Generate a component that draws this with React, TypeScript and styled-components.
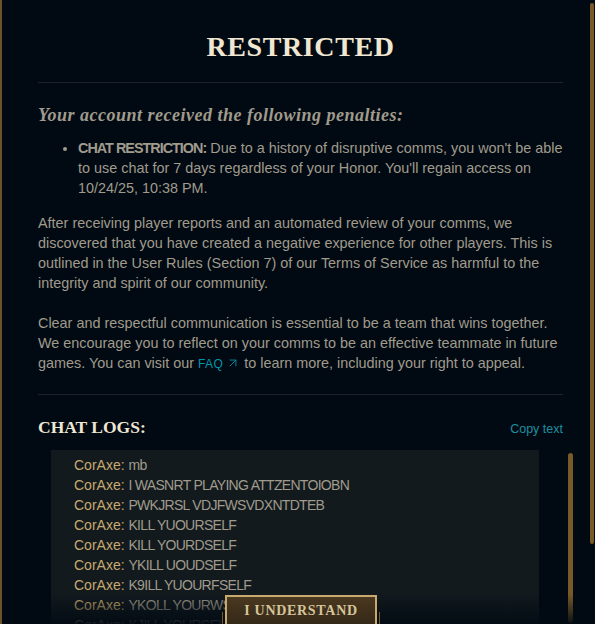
import React from 'react';
import styled, { createGlobalStyle } from 'styled-components';
import { ArrowUpRight } from 'lucide-react';

const GlobalStyle = createGlobalStyle`
	html, body {
		margin: 0;
		padding: 0;
		background: #010a13;
	}
`;

const serif = `"Liberation Serif", "DejaVu Serif", serif`;
const sans = `"Liberation Sans", Arial, sans-serif`;

const Frame = styled.div`
	position: relative;
	height: 624px;
	overflow: hidden;
	background: #010a13;
	border-left: 2px solid #6b5327;
	box-sizing: border-box;
	font-family: ${sans};
	color: #a09b8c;
`;

const Content = styled.div`
	padding: 30px 32px 0 36px;
`;

const Title = styled.h1`
	margin: 0;
	font-family: ${serif};
	font-weight: 700;
	font-size: 28px;
	line-height: 34px;
	letter-spacing: 0.6px;
	text-align: center;
	color: #f0e6d2;
`;

const Divider = styled.hr`
	margin: ${props => props.$top || 0}px 0 0;
	border: none;
	border-top: 1px solid #1e2328;
`;

const Subtitle = styled.h2`
	margin: 21px 0 0;
	font-family: ${serif};
	font-style: italic;
	font-weight: 700;
	font-size: 18px;
	line-height: 22px;
	letter-spacing: 0.5px;
	color: #a09b8c;
`;

const Penalties = styled.ul`
	margin: 12px 0 0;
	padding-left: 40px;
	font-size: 14.4px;
	line-height: 20px;

	strong {
		font-weight: 700;
		letter-spacing: -1px;
	}
`;

const Paragraph = styled.p`
	margin: ${props => props.$top}px 0 0;
	font-size: 14.4px;
	line-height: 20px;
`;

const Link = styled.a`
	color: #0596aa;
	font-size: 12px;
	text-decoration: none;
	letter-spacing: 0.4px;

	svg {
		vertical-align: -2px;
		margin-left: 3px;
	}
`;

const LogsHeader = styled.div`
	display: flex;
	align-items: baseline;
	justify-content: space-between;
	margin-top: 20px;
`;

const LogsTitle = styled.h3`
	margin: 0;
	font-family: ${serif};
	font-weight: 700;
	font-size: 17.5px;
	line-height: 24px;
	color: #f0e6d2;
`;

const CopyButton = styled.button`
	padding: 0;
	border: none;
	background: none;
	font-family: ${sans};
	font-size: 12.5px;
	color: #1d8fa1;
	cursor: pointer;
`;

const LogArea = styled.div`
	display: flex;
	margin: 11px -12px 0 13px;
`;

const LogBox = styled.div`
	width: 488px;
	height: 200px;
	padding: 5px 0 0 23px;
	box-sizing: border-box;
	background: #121a1e;
	font-size: 14px;
	line-height: 20px;
`;

const LogLine = styled.div`
	white-space: nowrap;
	color: #a09b8c;

	b {
		font-weight: 400;
		color: #c8aa6e;
	}

	span {
		letter-spacing: -0.7px;
	}
`;

const ScrollThumb = styled.div`
	flex: 0 0 5px;
	height: ${props => props.$height}px;
	margin: ${props => props.$top}px 0 0 ${props => props.$left}px;
	border-radius: 3px;
	background: #785a28;
`;

const OuterThumb = styled.div`
	position: absolute;
	top: 3px;
	right: 1px;
	width: 4px;
	height: 541px;
	border-radius: 2px;
	background: #785a28;
`;

const Fade = styled.div`
	position: absolute;
	left: 0;
	right: 0;
	bottom: 0;
	height: 30px;
	background: linear-gradient(to bottom, rgba(1, 10, 19, 0), rgba(1, 10, 19, 0.92));
	pointer-events: none;
`;

const Footer = styled.div`
	position: absolute;
	left: 0;
	right: 0;
	top: 595px;
	display: flex;
	justify-content: center;
	padding-left: 5px;
`;

const UnderstandButton = styled.button`
	position: relative;
	width: 152px;
	height: 38px;
	padding: 0 0 6px;
	border: 2px solid #c8aa6e;
	background: linear-gradient(to bottom, #4a3820, #2e2415);
	font-family: ${serif};
	font-weight: 700;
	font-size: 14px;
	letter-spacing: 0.7px;
	color: #d5c59a;
	cursor: pointer;

	&::before {
		content: '';
		position: absolute;
		top: 15px;
		bottom: -10px;
		left: -5px;
		right: -5px;
		border-left: 1px solid #785a28;
		border-right: 1px solid #785a28;
	}
`;

const logs = [
	'mb',
	'I WASNRT PLAYING ATTZENTOIOBN',
	'PWKJRSL VDJFWSVDXNTDTEB',
	'KILL YUOURSELF',
	'KILL YOURDSELF',
	'YKILL UOUDSELF',
	'K9ILL YUOURFSELF',
	'YKOLL YOURWSELF',
	'KJILL YOURSELF',
	'KILL YOURSELF',
];

const App = () => (
	<>
		<GlobalStyle />
		<Frame>
			<Content>
				<Title>RESTRICTED</Title>
				<Divider $top={18} />
				<Subtitle>Your account received the following penalties:</Subtitle>
				<Penalties>
					<li>
						<strong>CHAT RESTRICTION:</strong> Due to a history of disruptive comms, you won't be able
						to use chat for 7 days regardless of your Honor. You'll regain access on 10/24/25, 10:38 PM.
					</li>
				</Penalties>
				<Paragraph $top={15}>
					After receiving player reports and an automated review of your comms, we discovered that you
					have created a negative experience for other players. This is outlined in the User Rules
					(Section 7) of our Terms of Service as harmful to the integrity and spirit of our community.
				</Paragraph>
				<Paragraph $top={20}>
					Clear and respectful communication is essential to be a team that wins together. We encourage
					you to reflect on your comms to be an effective teammate in future games. You can visit
					our <Link href="#">FAQ<ArrowUpRight size={14} strokeWidth={1.5} /></Link> to learn more,
					including your right to appeal.
				</Paragraph>
				<Divider $top={20} />
				<LogsHeader>
					<LogsTitle>CHAT LOGS:</LogsTitle>
					<CopyButton>Copy text</CopyButton>
				</LogsHeader>
				<LogArea>
					<LogBox>
						{logs.map((msg, i) => (
							<LogLine key={i}>
								<b>CorAxe:</b> <span>{msg}</span>
							</LogLine>
						))}
					</LogBox>
					<ScrollThumb $top={3} $left={29} $height={170} />
				</LogArea>
			</Content>
			<OuterThumb />
			<Fade />
			<Footer>
				<UnderstandButton>I UNDERSTAND</UnderstandButton>
			</Footer>
		</Frame>
	</>
);

export default App;
